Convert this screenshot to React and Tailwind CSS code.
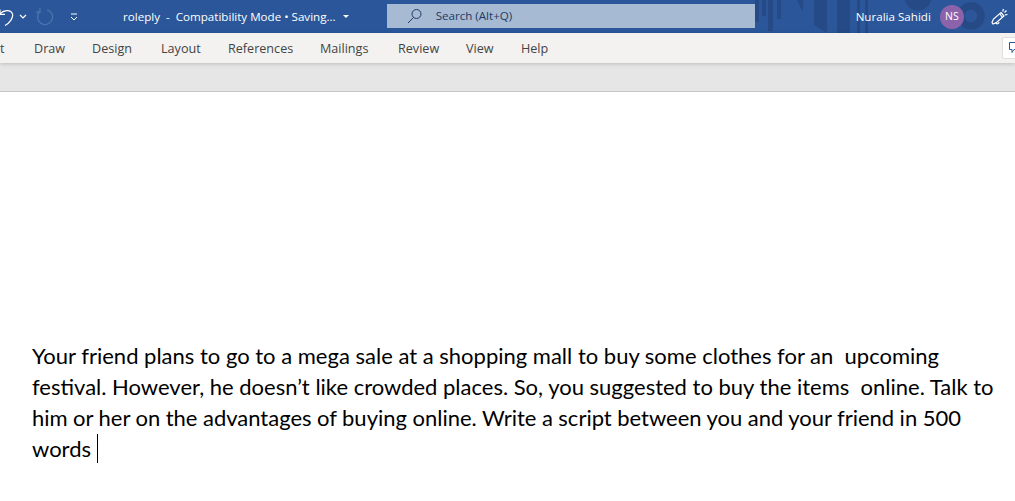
const tabs = [
  { label: "t", width: "w-[34px]" },
  { label: "Draw", width: "w-[58px]" },
  { label: "Design", width: "w-[69px]" },
  { label: "Layout", width: "w-[67px]" },
  { label: "References", width: "w-[92px]" },
  { label: "Mailings", width: "w-[78px]" },
  { label: "Review", width: "w-[68px]" },
  { label: "View", width: "w-[55px]" },
  { label: "Help", width: "w-[42px]" },
];

const HeaderArt = () => (
  <svg className="absolute right-0 top-0" width="275" height="33" viewBox="0 0 275 33">
    <g fill="#264a85">
      <rect x="15" y="0" width="4" height="22" />
      <rect x="22" y="0" width="4" height="16" />
      <rect x="28" y="0" width="5" height="31" />
      <rect x="37" y="0" width="4" height="19" />
      <path d="M57 0h6v12z" />
      <path d="M74 0h13v33l-13-8z" />
      <rect x="97" y="0" width="13" height="33" />
      <rect x="117" y="0" width="3" height="33" />
      <rect x="125" y="0" width="3" height="33" />
      <circle cx="178" cy="-3" r="13.5" />
    </g>
    <circle cx="231" cy="16" r="10" fill="none" stroke="#264a85" strokeWidth="7.5" />
  </svg>
);

const App = () => {
  return (
    <div className="w-[1015px] h-[501px] overflow-hidden bg-white font-['Open_Sans',sans-serif]">
      <header className="relative h-[33px] bg-[#2b579a] flex items-center text-white">
        <HeaderArt />
        <svg width="16" height="20" viewBox="0 0 16 20" fill="none" stroke="white" strokeWidth="1.2" className="ml-[-2px] shrink-0">
          <path d="M2 7C5 3 13 2 14.5 7c1 4-3 9-7.5 11.5" />
          <path d="M2 2.500v4.800h5" />
        </svg>
        <svg width="8" height="6" viewBox="0 0 8 6" fill="none" stroke="white" strokeWidth="1.2" className="ml-[5px] shrink-0">
          <path d="M1 1l3 3 3-3" />
        </svg>
        <svg width="18" height="18" viewBox="0 0 18 18" fill="none" stroke="#4a74ad" strokeWidth="1.3" className="ml-[9px] shrink-0">
          <path d="M4 3.500A7.500 7.500 0 1 0 11 1.800" />
          <path d="M4 0v4H0" />
        </svg>
        <svg width="8" height="8" viewBox="0 0 8 8" fill="none" stroke="white" className="ml-[16px] shrink-0">
          <path d="M1 1h6M1 4l3 3 3-3" />
        </svg>
        <span className="ml-[45px] text-[11.6px] whitespace-pre">roleply  -  Compatibility Mode • Saving...</span>
        <svg width="6" height="4" viewBox="0 0 6 4" fill="white" className="ml-[7px] shrink-0">
          <path d="M0 0h6L3 3z" />
        </svg>
        <div className="relative ml-[38px] w-[368px] h-[24px] mb-[1px] bg-[#a6bad3] flex items-center text-[#1f3a66] text-[11.6px]">
          <svg width="16" height="16" viewBox="0 0 16 16" fill="none" stroke="#1f3a66" className="ml-[20px]">
            <circle cx="9.500" cy="6" r="4.500" />
            <path d="M6.500 9.500 1 15" />
          </svg>
          <span className="ml-[13px]">Search (Alt+Q)</span>
        </div>
        <span className="relative ml-[101px] text-[11.6px]">Nuralia Sahidi</span>
        <div className="relative ml-[9px] w-[24px] h-[24px] rounded-full bg-[#8c62ab] flex items-center justify-center text-[10.5px]">NS</div>
        <svg width="17" height="18" viewBox="0 0 17 18" fill="none" stroke="white" strokeWidth="1.2" className="relative ml-[27px] shrink-0">
          <path d="M10 4.500 13 8 5.500 14.500 2 16 1 14.500l1.500-3.500z" />
          <path d="M4.500 14.500c1 2 3.500 1.500 3.500-.5 M9 6l2 3" />
          <path d="M12.500 1l-.8 2.500M15.500 2.500l-2 2M16.500 6.500l-2.500.3" />
        </svg>
      </header>
      <nav className="relative z-10 h-[30px] pt-[2px] bg-[#f3f2f1] shadow-[0_1px_4px_rgba(0,0,0,0.18)] flex items-center text-[12.6px] text-[#444444]">
        <div className="flex">
          {tabs.map((tab) => (
            <span key={tab.label} className={tab.width + " shrink-0"}>{tab.label}</span>
          ))}
        </div>
        <div className="absolute right-[-9px] top-[4px] w-[22px] h-[22px] bg-white border border-[#e1dfdd] rounded-[2px] flex items-center pl-[6px]">
          <svg width="11" height="12" viewBox="0 0 11 12" fill="none" stroke="#2b579a">
            <path d="M.5.500h10v7H5l-2 3v-3H.500z" />
          </svg>
        </div>
      </nav>
      <div className="h-[29px] bg-[#e6e6e6] border-b border-[#c6c6c6]"></div>
      <main className="pt-[248px] pl-[32px] pr-[10px] text-[22px] leading-[31px] text-black font-['Lato',sans-serif] whitespace-nowrap">
        <p className="whitespace-pre">Your friend plans to go to a mega sale at a shopping mall to buy some clothes for an  upcoming</p>
        <p className="whitespace-pre">festival. However, he doesn’t like crowded places. So, you suggested to buy the items  online. Talk to</p>
        <p className="whitespace-pre [word-spacing:-0.17px]">him or her on the advantages of buying online. Write a script between you and your friend in 500</p>
        <p className="whitespace-pre">words <span className="inline-block w-px h-[29px] bg-black align-[-6px]"></span></p>
      </main>
    </div>
  );
};

export default App;
